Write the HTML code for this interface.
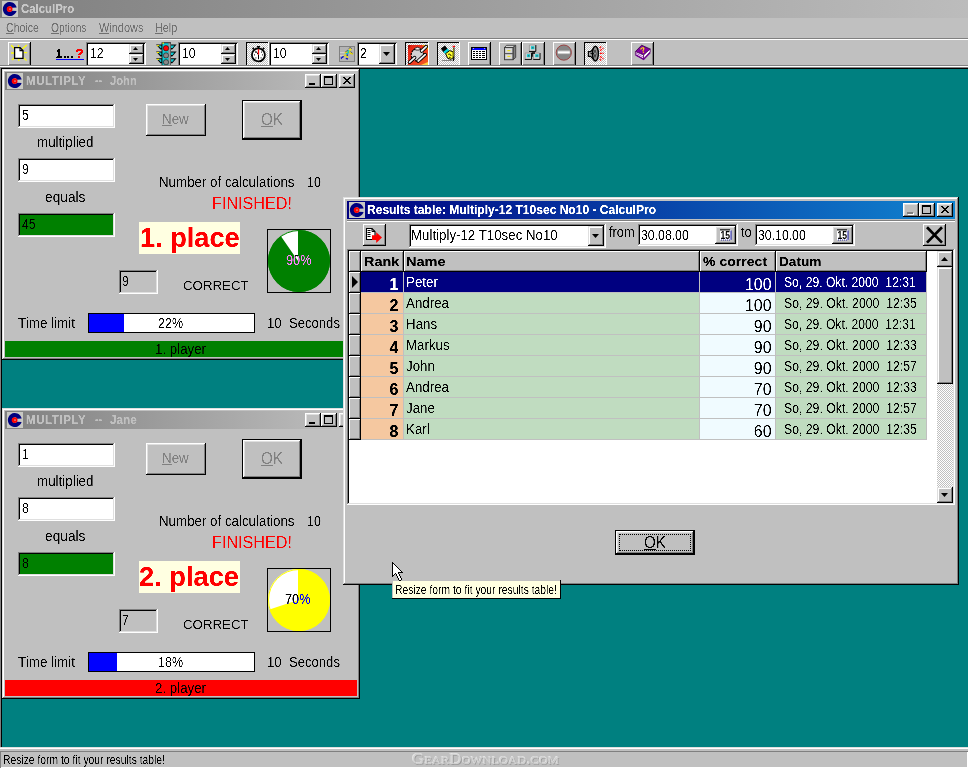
<!DOCTYPE html>
<html lang="en"><head><meta charset="utf-8"><title>CalculPro</title>
<style>
html,body{margin:0;padding:0;}
body{width:968px;height:768px;overflow:hidden;background:#008080;position:relative;font-family:"Liberation Sans",sans-serif;}
div,span,svg{position:absolute;box-sizing:border-box;}
.t{white-space:nowrap;transform-origin:0 50%;display:block;filter:url(#cr);}
u{text-decoration:underline;text-underline-offset:1px;}
.face{background:#c0c0c0;}
.raised{background:#c0c0c0;box-shadow:inset -1px -1px 0 #000,inset 1px 1px 0 #fff,inset -2px -2px 0 #808080,inset 2px 2px 0 #dfdfdf;}
.raised1{background:#c0c0c0;box-shadow:inset -1px -1px 0 #000,inset 1px 1px 0 #fff,inset -2px -2px 0 #808080;}
.tb{background:#c0c0c0;box-shadow:inset -1px 0 0 #000,inset 1px 1px 0 #fff,inset -2px -1px 0 #808080;}
.tbd{box-shadow:inset -1px 0 0 #fff,inset 1px 1px 0 #000;}
.sunken{box-shadow:inset -1px -1px 0 #fff,inset 1px 1px 0 #808080,inset -2px -2px 0 #dfdfdf,inset 2px 2px 0 #000;}
.frame{background:#c0c0c0;box-shadow:inset -1px -1px 0 #000,inset 1px 1px 0 #dfdfdf,inset -2px -2px 0 #808080,inset 2px 2px 0 #fff;}
.down{box-shadow:inset -1px -1px 0 #fff,inset 1px 1px 0 #000,inset 2px 2px 0 #808080;}
.dither{background-color:#c0c0c0;background-image:conic-gradient(#fff 25%,#c0c0c0 0 50%,#fff 0 75%,#c0c0c0 0);background-size:2px 2px;}
.capI{background:linear-gradient(90deg,#808080,#c0c0c0);}
.capA{background:linear-gradient(90deg,#000080,#1084d0);}
.cb{background:#c0c0c0;box-shadow:inset -1px -1px 0 #000,inset 1px 1px 0 #fff,inset -2px -2px 0 #808080,inset 2px 2px 0 #dfdfdf;}
</style></head>
<body>
<svg width="0" height="0" style="left:0;top:0"><defs><filter id="cr" x="0" y="0" width="100%" height="100%"><feComponentTransfer><feFuncA type="linear" slope="3" intercept="-1.05"/></feComponentTransfer></filter><filter id="cb" x="0" y="0" width="100%" height="100%"><feComponentTransfer><feFuncA type="linear" slope="2" intercept="-0.35"/></feComponentTransfer></filter><filter id="ch" x="0" y="0" width="100%" height="100%"><feComponentTransfer><feFuncA type="discrete" tableValues="0 1 1 1"/></feComponentTransfer></filter></defs></svg>
<div class="" style="left:0px;top:0px;width:968px;height:18px;background:linear-gradient(90deg,#808080,#bcbcbc);"></div>
<svg width="16" height="16" viewBox="0 0 16 16" style="left:2px;top:1px"><rect width="16" height="16" fill="#c8c8c4"/><path d="M14.66 6.5 A7 7 0 1 0 14.6 9.9 L9.85 9.7 A2.6 2.6 0 1 1 10 6.7 Z" fill="#000080"/><circle cx="7.6" cy="8.1" r="2.9" fill="#ff0000"/><circle cx="8" cy="8.1" r="0.9" fill="#d09090"/></svg>
<span class="t " style="left:21.00px;top:0px;font-size:12.5px;line-height:19px;color:#c8c8c8;font-weight:bold;filter:url(#cb);transform:scaleX(0.9129);">CalculPro</span>
<div class="face" style="left:0px;top:18px;width:968px;height:20px;"></div>
<span class="t " style="left:6.30px;top:18px;font-size:13px;line-height:20px;color:#707070;transform:scaleX(0.8149);"><u>C</u>hoice</span>
<span class="t " style="left:51.30px;top:18px;font-size:13px;line-height:20px;color:#707070;transform:scaleX(0.7925);"><u>O</u>ptions</span>
<span class="t " style="left:99.00px;top:18px;font-size:13px;line-height:20px;color:#707070;transform:scaleX(0.8421);"><u>W</u>indows</span>
<span class="t " style="left:155.30px;top:18px;font-size:13px;line-height:20px;color:#707070;transform:scaleX(0.8306);"><u>H</u>elp</span>
<div class="" style="left:0px;top:38px;width:968px;height:1px;background:#808080"></div>
<div class="" style="left:0px;top:39px;width:968px;height:1px;background:#fff"></div>
<div class="face" style="left:0px;top:40px;width:968px;height:25px;"></div>
<div class="" style="left:0px;top:65px;width:968px;height:1px;background:#808080"></div>
<div class="" style="left:0px;top:66px;width:968px;height:1px;background:#fff"></div>
<div class="tb" style="left:8px;top:42px;width:23px;height:23px;"><svg width="23" height="23" viewBox="0 0 23 23" style="left:0px;top:0px"><g stroke="#ffff00" stroke-width="1.3"><path d="M3.2 3.2l3 3M18.8 3l-4.6 4M3 11h3.4M15.8 10.6h3.4M4 18l2.6-2.6M18.5 18.6l-3-3M10.8 19v-2.5M10.5 3v2.5"/></g><path d="M6.6 5.6h5.4l3 3v7.8h-8.4z" fill="#fff" stroke="#000" stroke-width="1.3"/><path d="M12 5.6v3h3" fill="none" stroke="#000" stroke-width="1.1"/></svg></div>
<span class="t " style="left:56.30px;top:45px;font-size:12.5px;line-height:19px;color:#000;font-weight:bold;filter:url(#ch);letter-spacing:0.6px;transform:scaleX(0.9173);">1...</span>
<span class="t " style="left:75.40px;top:44px;font-size:13px;line-height:20px;color:#ff0000;font-weight:bold;filter:url(#ch);transform:scaleX(1.0829);">?</span>
<div class="" style="left:56px;top:59px;width:28px;height:1px;background:#0000ff;"></div>
<div class="" style="left:86px;top:42px;width:60px;height:23px;background:#fff;box-shadow:inset 1px 1px 0 #808080,inset -1px 0 0 #fff,inset 2px 2px 0 #000,inset -2px -1px 0 #dfdfdf;"></div><div class="frame" style="left:129px;top:44px;width:15px;height:10px;"></div><div class="frame" style="left:129px;top:54px;width:15px;height:10px;"></div><svg width="15" height="10" viewBox="0 0 15 10" style="left:129px;top:44px"><path d="M4 6h5l-2.5-3z" fill="#000"/></svg><svg width="15" height="10" viewBox="0 0 15 10" style="left:129px;top:54px"><path d="M4 4h5l-2.5 3z" fill="#000"/></svg><span class="t " style="left:89.50px;top:43px;font-size:14px;line-height:21px;color:#000;transform:scaleX(0.8700);">12</span>
<div class="" style="left:156px;top:42px;width:21px;height:23px;"><svg width="21" height="23" viewBox="0 0 21 23" style="left:0px;top:0px"><path d="M0 2.6h6v5h-1.6z" fill="#000"/><path d="M2.4 3.6h3.2v2.6h-1z" fill="#10c8d0"/><rect x="0.8" y="3.1" width="2.4" height="1.1" fill="#ffee00"/><path d="M20.6 2.6h-6.6v5h2.2z" fill="#000"/><path d="M18.4 3.6h-3.4v2.4h1.6z" fill="#10c8d0"/><path d="M0 9.5h6v5h-1.6z" fill="#000"/><path d="M2.4 10.5h3.2v2.6h-1z" fill="#10c8d0"/><rect x="0.8" y="10.0" width="2.4" height="1.1" fill="#ffee00"/><path d="M20.6 9.5h-6.6v5h2.2z" fill="#000"/><path d="M18.4 10.5h-3.4v2.4h1.6z" fill="#10c8d0"/><path d="M0 16.3h6v5h-1.6z" fill="#000"/><path d="M2.4 17.3h3.2v2.6h-1z" fill="#10c8d0"/><rect x="0.8" y="16.8" width="2.4" height="1.1" fill="#ffee00"/><path d="M20.6 16.3h-6.6v5h2.2z" fill="#000"/><path d="M18.4 17.3h-3.4v2.4h1.6z" fill="#10c8d0"/><rect x="5.6" y="0.4" width="9.4" height="22.6" fill="#000"/><rect x="6.4" y="1.2" width="6.4" height="21.8" fill="#10c8d0"/><rect x="12.4" y="1.2" width="2.2" height="21.8" fill="#a0a0a0"/><rect x="6.4" y="0.6" width="1.6" height="1.2" fill="#ffee00"/><circle cx="10" cy="6.2" r="2.7" fill="#ff0000" stroke="#000" stroke-width="0.5"/><circle cx="10" cy="13.4" r="2.6" fill="#888" stroke="#000" stroke-width="0.5"/><circle cx="10" cy="20.2" r="2.6" fill="#888" stroke="#000" stroke-width="0.5"/></svg></div>
<div class="" style="left:178px;top:42px;width:60px;height:23px;background:#fff;box-shadow:inset 1px 1px 0 #808080,inset -1px 0 0 #fff,inset 2px 2px 0 #000,inset -2px -1px 0 #dfdfdf;"></div><div class="frame" style="left:221px;top:44px;width:15px;height:10px;"></div><div class="frame" style="left:221px;top:54px;width:15px;height:10px;"></div><svg width="15" height="10" viewBox="0 0 15 10" style="left:221px;top:44px"><path d="M4 6h5l-2.5-3z" fill="#000"/></svg><svg width="15" height="10" viewBox="0 0 15 10" style="left:221px;top:54px"><path d="M4 4h5l-2.5 3z" fill="#000"/></svg><span class="t " style="left:181.50px;top:43px;font-size:14px;line-height:21px;color:#000;transform:scaleX(0.8700);">10</span>
<div class="dither tbd" style="left:246px;top:42px;width:23px;height:23px;"><svg width="23" height="23" viewBox="0 0 23 23" style="left:0px;top:0px"><circle cx="12.4" cy="12.9" r="6.5" fill="#fff" stroke="#000" stroke-width="1.8"/><path d="M11 4.6h3M12.5 4.6v2M7 6.3l1.6 1.6M17.8 6.3l-1.6 1.6M6.4 7l1.4-1.4M18.4 7l-1.4-1.4" stroke="#000" stroke-width="1.3" fill="none"/><path d="M12.5 12.8v4.4M12.3 12.6l-2.4-3.4" stroke="#000" stroke-width="1" fill="none"/><path d="M12.5 7.2v5.4" stroke="#ff0000" stroke-width="1.3"/><g fill="#000"><rect x="8" y="12.4" width="1" height="1"/><rect x="16" y="12.4" width="1" height="1"/><rect x="9" y="9.6" width="1" height="1"/><rect x="15" y="9.6" width="1" height="1"/><rect x="9.4" y="15.4" width="1" height="1"/><rect x="14.6" y="15.4" width="1" height="1"/></g></svg></div>
<div class="" style="left:269px;top:42px;width:60px;height:23px;background:#fff;box-shadow:inset 1px 1px 0 #808080,inset -1px 0 0 #fff,inset 2px 2px 0 #000,inset -2px -1px 0 #dfdfdf;"></div><div class="frame" style="left:312px;top:44px;width:15px;height:10px;"></div><div class="frame" style="left:312px;top:54px;width:15px;height:10px;"></div><svg width="15" height="10" viewBox="0 0 15 10" style="left:312px;top:44px"><path d="M4 6h5l-2.5-3z" fill="#000"/></svg><svg width="15" height="10" viewBox="0 0 15 10" style="left:312px;top:54px"><path d="M4 4h5l-2.5 3z" fill="#000"/></svg><span class="t " style="left:272.50px;top:43px;font-size:14px;line-height:21px;color:#000;transform:scaleX(0.8700);">10</span>
<div class="" style="left:339px;top:46px;width:16px;height:16px;"><svg width="16" height="16" viewBox="0 0 16 16" style="left:0px;top:0px"><rect width="16" height="16" fill="#b4b4b4"/><path d="M1 6.5h5M1 9.5h4M1 12.5h3" stroke="#d0d0d0" stroke-width="1"/><rect x="0.5" y="0.5" width="15" height="15" fill="none" stroke="#808080"/><path d="M9.6 2.6l1.6-1 1.6 1M6 6.4l3-2.4M11.6 5.4l2.4 2.6" stroke="#303030" stroke-width="0.7" fill="none"/><path d="M10.4 4.6l-3 3.6" stroke="#10c0c8" stroke-width="2.4" fill="none"/><circle cx="11.2" cy="3.6" r="1.2" fill="#ffe800"/><path d="M10 5.4l2 2.2 2 0.2M8.6 6l-3 1" stroke="#e8d800" stroke-width="1.3" fill="none"/><path d="M7.2 8.6l-2.4 1.6M7.6 9l1 3.2" stroke="#e8d800" stroke-width="1.4" fill="none"/><path d="M4.6 10.2l-2.8 2.4" stroke="#1818c0" stroke-width="1.5" fill="none"/><path d="M6.8 12.4l2.2 0.6" stroke="#1818c0" stroke-width="1.5" fill="none"/><path d="M7.6 8.8l1.4 0.6" stroke="#1818c0" stroke-width="1.4" fill="none"/></svg></div>
<div class="" style="left:357px;top:42px;width:40px;height:23px;background:#fff;box-shadow:inset 1px 1px 0 #808080,inset -1px 0 0 #fff,inset 2px 2px 0 #000,inset -2px -1px 0 #dfdfdf;"></div>
<div class="frame" style="left:379px;top:44px;width:16px;height:20px;"></div>
<svg width="16" height="20" viewBox="0 0 16 20" style="left:379px;top:44px"><path d="M4 8h7l-3.5 4z" fill="#000"/></svg>
<span class="t " style="left:359.70px;top:43px;font-size:14px;line-height:21px;color:#000;transform:scaleX(0.8700);">2</span>
<div class="dither tbd" style="left:405px;top:42px;width:24px;height:23px;"><svg width="24" height="23" viewBox="0 0 24 23" style="left:0px;top:0px"><defs><linearGradient id="pg" x1="0" y1="0" x2="1" y2="1"><stop offset="0" stop-color="#e02010"/><stop offset="0.55" stop-color="#f03820"/><stop offset="1" stop-color="#f06020"/></linearGradient></defs><rect x="3" y="3" width="20" height="20" fill="url(#pg)"/><path d="M17 3h6v5z" fill="#ffb000"/><path d="M3 3h3l-3 5z" fill="#b01008"/><path d="M16 23h7v-3z" fill="#ffd040"/><path d="M8.2 8.2a6 6.5 45 0 1 8.6 0.3a6 6.5 45 0 1 0.2 8.7a6 6.5 45 0 1-8.8 0.2a6 6.5 45 0 1 0-9.2z" fill="#d4d4d4" stroke="#000" stroke-width="1.1" stroke-dasharray="2 1"/><path d="M9.5 6.5q3-2.5 6 0l-1 1.5h-4z" fill="#fff" stroke="#000" stroke-width="0.8"/><g stroke="#000" stroke-width="3.6" stroke-linecap="round" fill="none"><path d="M4.6 20.2l5-4.6M16.6 9l4.6-4.4M13.2 19l7-6.4"/></g><g stroke="#f4f4f4" stroke-width="1.8" stroke-linecap="round" fill="none"><path d="M4.6 20.2l5-4.6M16.6 9l4.6-4.4M13.2 19l7-6.4"/></g></svg></div>
<div class="dither tbd" style="left:437px;top:42px;width:23px;height:23px;"><svg width="23" height="23" viewBox="0 0 23 23" style="left:0px;top:0px"><path d="M3.8 6.6l4.2-3.2 2.8 3.8-4.2 3.2z" fill="#000"/><path d="M6.4 9.8l4.3-3.2 1.7 2.3-4.3 3.2z" fill="#00d8e0"/><path d="M8.6 11.6l4-3 3.6 1.2v6l-2.4 1.6-3.2-1.2z" fill="#ffff30" stroke="#000" stroke-width="1"/><path d="M11.2 12.4a1.8 1.8 0 0 1 2.8 1.6M12 15l1.8 1" stroke="#000" stroke-width="0.9" fill="none"/><path d="M16.8 5.6v11.4l-0.6 2" stroke="#000" stroke-width="1.3" fill="none"/><path d="M16.3 6.5v8" stroke="#e0e000" stroke-width="0.7" fill="none"/><rect x="15.6" y="3.8" width="2.4" height="1.4" fill="#ff0000"/><path d="M5.2 18.5h10" stroke="#808080" stroke-width="1"/></svg></div>
<div class="tb" style="left:468px;top:42px;width:23px;height:23px;"><svg shape-rendering="crispEdges" width="23" height="23" viewBox="0 0 23 23" style="left:0px;top:0px"><rect x="3.5" y="5.5" width="15" height="12" fill="#fff" stroke="#000"/><rect x="4" y="6" width="14" height="2" fill="#0000ff"/><rect x="4.6" y="6.2" width="1.6" height="0.8" fill="#c0c0a0"/><rect x="15.6" y="6.2" width="1.6" height="0.8" fill="#c0c0a0"/><g fill="#000"><rect x="5" y="9" width="2" height="1"/><rect x="8" y="9" width="2" height="1"/><rect x="11" y="9" width="2" height="1"/><rect x="14" y="9" width="3" height="1"/><rect x="5" y="11" width="2" height="1"/><rect x="8" y="11" width="2" height="1"/><rect x="11" y="11" width="2" height="1"/><rect x="14" y="11" width="3" height="1"/><rect x="5" y="13" width="2" height="1"/><rect x="8" y="13" width="2" height="1"/><rect x="11" y="13" width="2" height="1"/><rect x="14" y="13" width="3" height="1"/><rect x="5" y="15" width="2" height="1"/><rect x="8" y="15" width="2" height="1"/><rect x="11" y="15" width="2" height="1"/><rect x="14" y="15" width="3" height="1"/></g></svg></div>
<div class="tb" style="left:499px;top:42px;width:23px;height:23px;"><svg width="23" height="23" viewBox="0 0 23 23" style="left:0px;top:0px"><path d="M5.5 5.5l2-2.2h9.2l-2.7 2.2z" fill="#d8d8d8" stroke="#404040" stroke-width="0.9"/><path d="M14 5.5l2.7-2.2v12.2l-2.7 2.2z" fill="#808080" stroke="#404040" stroke-width="0.9"/><rect x="5.5" y="5.5" width="8.5" height="12.2" fill="#c4c4c4" stroke="#404040" stroke-width="1"/><rect x="6.8" y="6.8" width="6" height="3.8" fill="#dcdcdc"/><rect x="6.8" y="12.6" width="6" height="3.8" fill="#dcdcdc"/><path d="M5.5 11.6h8.5" stroke="#505050" stroke-width="1"/><rect x="8.4" y="8" width="3" height="1.2" fill="#e8e020"/><rect x="8.4" y="13.8" width="3" height="1.2" fill="#e8e020"/></svg></div>
<div class="tb" style="left:522px;top:42px;width:23px;height:23px;"><svg width="23" height="23" viewBox="0 0 23 23" style="left:0px;top:0px"><rect x="7.4" y="3" width="6.4" height="6" fill="#d8d8d8"/><path d="M13.8 3v6.4h-6.8" stroke="#000" stroke-width="1" fill="none"/><path d="M7.4 9v-6h6" stroke="#909090" stroke-width="0.8" fill="none"/><rect x="9.0" y="4.2" width="3.4" height="3" fill="#10c8d0"/><rect x="10.2" y="5.2" width="1.2" height="1.2" fill="#505050"/><rect x="3.2" y="11" width="6.4" height="6" fill="#d8d8d8"/><path d="M9.600000000000001 11v6.4h-6.8" stroke="#000" stroke-width="1" fill="none"/><path d="M3.2 17v-6h6" stroke="#909090" stroke-width="0.8" fill="none"/><rect x="4.800000000000001" y="12.2" width="3.4" height="3" fill="#10c8d0"/><rect x="6.0" y="13.2" width="1.2" height="1.2" fill="#505050"/><rect x="11.6" y="11" width="6.4" height="6" fill="#d8d8d8"/><path d="M18.0 11v6.4h-6.8" stroke="#000" stroke-width="1" fill="none"/><path d="M11.6 17v-6h6" stroke="#909090" stroke-width="0.8" fill="none"/><rect x="13.2" y="12.2" width="3.4" height="3" fill="#10c8d0"/><rect x="14.399999999999999" y="13.2" width="1.2" height="1.2" fill="#505050"/><path d="M9.6 10.2h3.4v1.6h-2.2v3h-1.2z" fill="#000"/></svg></div>
<div class="tb" style="left:553px;top:42px;width:23px;height:23px;"><svg width="23" height="23" viewBox="0 0 23 23" style="left:0px;top:0px"><defs><linearGradient id="sg" x1="0" y1="0" x2="0" y2="1"><stop offset="0" stop-color="#888"/><stop offset="0.45" stop-color="#fff"/><stop offset="0.6" stop-color="#fff"/><stop offset="1" stop-color="#999"/></linearGradient></defs><circle cx="10.8" cy="10.6" r="7.6" fill="#868686" stroke="#983838" stroke-width="0.9"/><rect x="4.8" y="8" width="12" height="4.4" fill="url(#sg)"/></svg></div>
<div class="dither tbd" style="left:584px;top:42px;width:23px;height:23px;"><svg width="23" height="23" viewBox="0 0 23 23" style="left:0px;top:0px"><path d="M4.4 9.6h2.2l3.4-3.6v12l-3.4-3.6h-2.2z" fill="#b0b0b0" stroke="#000" stroke-width="1.2"/><ellipse cx="11.4" cy="11.6" rx="3" ry="7.4" fill="#909090" stroke="#000" stroke-width="1.4"/><path d="M11 8v7.4M6.4 11.6h4" stroke="#000" stroke-width="0.9"/><ellipse cx="11" cy="11.6" rx="1" ry="2" fill="#d0d0d0" stroke="#000" stroke-width="0.6"/><g stroke="#ff1010" stroke-width="1.2" stroke-dasharray="2.4 0.8"><path d="M16 11.4h4M16 8.8l3.4-2.8M16 14.2l3.4 2.8M15.6 6.2l1.8-2.2M15.6 16.8l1.8 2.2"/></g></svg></div>
<div class="tb" style="left:631px;top:42px;width:23px;height:23px;"><svg width="23" height="23" viewBox="0 0 23 23" style="left:0px;top:0px"><path d="M4.4 9.6l6.2-6.4 8.6 3.8-6.6 6z" fill="#8000a0" stroke="#300040" stroke-width="0.8"/><path d="M4.4 9.6v3.2l8.2 4.4v-4.2z" fill="#fff" stroke="#500060" stroke-width="0.8"/><path d="M12.6 13l6.6-6v3l-6.6 7.2z" fill="#fff" stroke="#500060" stroke-width="0.8"/><path d="M4.6 12.8l8 4.6 6.6-7" stroke="#700090" stroke-width="1.5" fill="none"/><path d="M5 11.2l7.6 4" stroke="#9020b0" stroke-width="0.7" fill="none"/><text x="12.2" y="10.8" font-family="Liberation Sans,sans-serif" font-weight="bold" font-size="8" fill="#ffee00" text-anchor="middle" transform="rotate(-20 12 9)">?</text></svg></div>
<div class="" style="left:0px;top:67px;width:968px;height:1px;background:#808080"></div>
<div class="" style="left:0px;top:67px;width:1px;height:680px;background:#808080"></div>
<div class="" style="left:1px;top:68px;width:967px;height:1px;background:#000"></div>
<div class="" style="left:1px;top:68px;width:1px;height:679px;background:#000"></div>
<div class="" style="left:0px;top:747px;width:968px;height:1px;background:#dfdfdf"></div>
<div class="" style="left:0px;top:748px;width:968px;height:1px;background:#fff"></div>
<div class="face" style="left:0px;top:749px;width:968px;height:19px;"></div>
<div class="" style="left:0px;top:751px;width:968px;height:17px;box-shadow:inset 1px 1px 0 #808080,inset -1px -1px 0 #fff;"></div>
<span class="t " style="left:2.80px;top:751px;font-size:12.5px;line-height:19px;color:#000;transform:scaleX(0.8268);">Resize form to fit your results table!</span>
<span class="t" style="left:411.6px;top:751px;font-family:'Liberation Serif',serif;font-variant:small-caps;font-size:15px;line-height:normal;color:#d4d4d4;text-shadow:0.7px 0.7px 0 #9a9a9a,-0.6px -0.6px 0 #e4e4e4;transform:scaleX(1.138);filter:none;">GearDownload.com</span>
<div class="frame" style="left:2px;top:69px;width:358px;height:291px;"></div><div class="capI" style="left:5px;top:72px;width:352px;height:18px;"></div><svg width="16" height="16" viewBox="0 0 16 16" style="left:7px;top:73px"><rect width="16" height="16" fill="#c8c8c4"/><path d="M14.66 6.5 A7 7 0 1 0 14.6 9.9 L9.85 9.7 A2.6 2.6 0 1 1 10 6.7 Z" fill="#000080"/><circle cx="7.6" cy="8.1" r="2.9" fill="#ff0000"/><circle cx="8" cy="8.1" r="0.9" fill="#d09090"/></svg><span class="t " style="left:26.00px;top:72px;font-size:12px;line-height:18px;color:#c0c0c0;font-weight:bold;filter:url(#cb);letter-spacing:0.6px;transform:scaleX(0.9578);">MULTIPLY</span> <span class="t " style="left:94.60px;top:72px;font-size:12px;line-height:18px;color:#c0c0c0;font-weight:bold;filter:url(#cb);transform:scaleX(0.9015);">--</span> <span class="t " style="left:110.00px;top:72px;font-size:12px;line-height:18px;color:#c0c0c0;font-weight:bold;filter:url(#cb);transform:scaleX(0.9342);">John</span><div class="cb" style="left:305px;top:74px;width:16px;height:14px"><svg width="16" height="14" viewBox="0 0 16 14" style="left:0;top:0"><rect x="4" y="9" width="6" height="2" fill="#000"/></svg></div><div class="cb" style="left:321px;top:74px;width:16px;height:14px"><svg width="16" height="14" viewBox="0 0 16 14" style="left:0;top:0"><path d="M3 2h9v9h-9z M4 4v6h7v-6z" fill="#000" fill-rule="evenodd"/></svg></div><div class="cb" style="left:339px;top:74px;width:16px;height:14px"><svg width="16" height="14" viewBox="0 0 16 14" style="left:0;top:0"><g fill="#000" shape-rendering="crispEdges"><rect x="4" y="3" width="2" height="1"/><rect x="10" y="3" width="2" height="1"/><rect x="5" y="4" width="2" height="1"/><rect x="9" y="4" width="2" height="1"/><rect x="6" y="5" width="4" height="1"/><rect x="7" y="6" width="2" height="1"/><rect x="6" y="7" width="4" height="1"/><rect x="5" y="8" width="2" height="1"/><rect x="9" y="8" width="2" height="1"/><rect x="4" y="9" width="2" height="1"/><rect x="10" y="9" width="2" height="1"/></g></svg></div><div class="sunken" style="left:18px;top:104px;width:97px;height:24px;background:#fff"></div><span class="t " style="left:21.50px;top:105px;font-size:14px;line-height:21px;color:#000;transform:scaleX(0.8700);">5</span><span class="t " style="left:37.00px;top:132px;font-size:14px;line-height:21px;color:#000;transform:scaleX(0.9552);">multiplied</span><div class="sunken" style="left:18px;top:158px;width:97px;height:24px;background:#fff"></div><span class="t " style="left:21.50px;top:159px;font-size:14px;line-height:21px;color:#000;transform:scaleX(0.8700);">9</span><span class="t " style="left:45.20px;top:187px;font-size:14px;line-height:21px;color:#000;transform:scaleX(0.9796);">equals</span><div class="sunken" style="left:18px;top:213px;width:97px;height:24px;background:#008000"></div><span class="t " style="left:21.50px;top:214px;font-size:14px;line-height:21px;color:#000;transform:scaleX(0.8700);">45</span><div class="raised" style="left:146px;top:104px;width:60px;height:32px;"></div><span class="t " style="left:161.80px;top:109px;font-size:14px;line-height:21px;color:#808080;transform:scaleX(0.9545);"><u>N</u>ew</span><div class="" style="left:242px;top:100px;width:60px;height:40px;background:#000"></div><div class="raised" style="left:243px;top:101px;width:58px;height:38px;"></div><span class="t " style="left:260.80px;top:108px;font-size:16px;line-height:24px;color:#808080;transform:scaleX(0.9512);"><u>O</u>K</span><span class="t " style="left:159.30px;top:172px;font-size:14px;line-height:21px;color:#000;transform:scaleX(0.9517);">Number of calculations</span><span class="t " style="left:306.80px;top:172px;font-size:14px;line-height:21px;color:#000;transform:scaleX(0.8877);">10</span><span class="t " style="left:212.30px;top:192px;font-size:16px;line-height:24px;color:#ff0000;transform:scaleX(1.0110);">FINISHED!</span><div class="" style="left:139px;top:222px;width:101px;height:32px;background:#ffffe1"></div><span class="t " style="left:139.80px;top:217px;font-size:28px;line-height:42px;color:#ff0000;font-weight:bold;filter:url(#cb);transform:scaleX(0.9692);">1. place</span><div class="sunken" style="left:119px;top:270px;width:39px;height:24px;background:#c0c0c0"></div><span class="t " style="left:122.00px;top:271px;font-size:14px;line-height:21px;color:#000;transform:scaleX(0.8700);">9</span><span class="t " style="left:183.30px;top:276px;font-size:13.5px;line-height:20px;color:#000;transform:scaleX(0.9842);">CORRECT</span><div class="" style="left:267px;top:229px;width:64px;height:64px;background:#c0c0c0;border:1px solid #000;"></div><svg width="64" height="64" viewBox="0 0 64 64" style="left:267px;top:229px"><ellipse cx="32" cy="32" rx="31" ry="31" fill="#008000"/><path d="M31 32 L31 1 L32 1 A31 31 0 0 0 13.78 6.92 Z" fill="#fff"/><ellipse cx="32" cy="32" rx="30.5" ry="30.5" fill="none" stroke="#008000" stroke-width="1"/></svg><span class="t " style="left:285.60px;top:250px;font-size:14px;line-height:21px;color:#fff;transform:scaleX(0.9139);mix-blend-mode:difference;">90%</span><span class="t " style="left:18.30px;top:313px;font-size:14px;line-height:21px;color:#000;transform:scaleX(0.9601);">Time limit</span><div class="" style="left:88px;top:313px;width:167px;height:20px;background:#fff;border:1px solid #000"></div><div class="" style="left:89px;top:314px;width:35px;height:18px;background:#0000ff"></div><span class="t " style="left:158.00px;top:313px;font-size:14px;line-height:21px;color:#000;transform:scaleX(0.8925);">22%</span><span class="t " style="left:267.30px;top:313px;font-size:14px;line-height:21px;color:#000;transform:scaleX(0.9377);">10 &nbsp;Seconds</span><div class="" style="left:5px;top:341px;width:352px;height:16px;background:#008000"></div><span class="t " style="left:155.20px;top:339px;font-size:14px;line-height:21px;color:#000;transform:scaleX(0.9498);">1. player</span>
<div class="frame" style="left:2px;top:408px;width:358px;height:291px;"></div><div class="capI" style="left:5px;top:411px;width:352px;height:18px;"></div><svg width="16" height="16" viewBox="0 0 16 16" style="left:7px;top:412px"><rect width="16" height="16" fill="#c8c8c4"/><path d="M14.66 6.5 A7 7 0 1 0 14.6 9.9 L9.85 9.7 A2.6 2.6 0 1 1 10 6.7 Z" fill="#000080"/><circle cx="7.6" cy="8.1" r="2.9" fill="#ff0000"/><circle cx="8" cy="8.1" r="0.9" fill="#d09090"/></svg><span class="t " style="left:26.00px;top:411px;font-size:12px;line-height:18px;color:#c0c0c0;font-weight:bold;filter:url(#cb);letter-spacing:0.6px;transform:scaleX(0.9578);">MULTIPLY</span> <span class="t " style="left:94.60px;top:411px;font-size:12px;line-height:18px;color:#c0c0c0;font-weight:bold;filter:url(#cb);transform:scaleX(0.9015);">--</span> <span class="t " style="left:110.00px;top:411px;font-size:12px;line-height:18px;color:#c0c0c0;font-weight:bold;filter:url(#cb);transform:scaleX(0.9793);">Jane</span><div class="cb" style="left:305px;top:413px;width:16px;height:14px"><svg width="16" height="14" viewBox="0 0 16 14" style="left:0;top:0"><rect x="4" y="9" width="6" height="2" fill="#000"/></svg></div><div class="cb" style="left:321px;top:413px;width:16px;height:14px"><svg width="16" height="14" viewBox="0 0 16 14" style="left:0;top:0"><path d="M3 2h9v9h-9z M4 4v6h7v-6z" fill="#000" fill-rule="evenodd"/></svg></div><div class="cb" style="left:339px;top:413px;width:16px;height:14px"><svg width="16" height="14" viewBox="0 0 16 14" style="left:0;top:0"><g fill="#000" shape-rendering="crispEdges"><rect x="4" y="3" width="2" height="1"/><rect x="10" y="3" width="2" height="1"/><rect x="5" y="4" width="2" height="1"/><rect x="9" y="4" width="2" height="1"/><rect x="6" y="5" width="4" height="1"/><rect x="7" y="6" width="2" height="1"/><rect x="6" y="7" width="4" height="1"/><rect x="5" y="8" width="2" height="1"/><rect x="9" y="8" width="2" height="1"/><rect x="4" y="9" width="2" height="1"/><rect x="10" y="9" width="2" height="1"/></g></svg></div><div class="sunken" style="left:18px;top:443px;width:97px;height:24px;background:#fff"></div><span class="t " style="left:22.30px;top:444px;font-size:14px;line-height:21px;color:#000;transform:scaleX(0.8700);">1</span><span class="t " style="left:37.00px;top:471px;font-size:14px;line-height:21px;color:#000;transform:scaleX(0.9552);">multiplied</span><div class="sunken" style="left:18px;top:497px;width:97px;height:24px;background:#fff"></div><span class="t " style="left:21.50px;top:498px;font-size:14px;line-height:21px;color:#000;transform:scaleX(0.8700);">8</span><span class="t " style="left:45.20px;top:526px;font-size:14px;line-height:21px;color:#000;transform:scaleX(0.9796);">equals</span><div class="sunken" style="left:18px;top:552px;width:97px;height:24px;background:#008000"></div><span class="t " style="left:21.50px;top:553px;font-size:14px;line-height:21px;color:#000;transform:scaleX(0.8700);">8</span><div class="raised" style="left:146px;top:443px;width:60px;height:32px;"></div><span class="t " style="left:161.80px;top:448px;font-size:14px;line-height:21px;color:#808080;transform:scaleX(0.9545);"><u>N</u>ew</span><div class="" style="left:242px;top:439px;width:60px;height:40px;background:#000"></div><div class="raised" style="left:243px;top:440px;width:58px;height:38px;"></div><span class="t " style="left:260.80px;top:447px;font-size:16px;line-height:24px;color:#808080;transform:scaleX(0.9512);"><u>O</u>K</span><span class="t " style="left:159.30px;top:511px;font-size:14px;line-height:21px;color:#000;transform:scaleX(0.9517);">Number of calculations</span><span class="t " style="left:306.80px;top:511px;font-size:14px;line-height:21px;color:#000;transform:scaleX(0.8877);">10</span><span class="t " style="left:212.30px;top:531px;font-size:16px;line-height:24px;color:#ff0000;transform:scaleX(1.0110);">FINISHED!</span><div class="" style="left:139px;top:561px;width:101px;height:32px;background:#ffffe1"></div><span class="t " style="left:139.00px;top:556px;font-size:28px;line-height:42px;color:#ff0000;font-weight:bold;filter:url(#cb);transform:scaleX(0.9731);">2. place</span><div class="sunken" style="left:119px;top:609px;width:39px;height:24px;background:#c0c0c0"></div><span class="t " style="left:122.00px;top:610px;font-size:14px;line-height:21px;color:#000;transform:scaleX(0.8700);">7</span><span class="t " style="left:183.30px;top:615px;font-size:13.5px;line-height:20px;color:#000;transform:scaleX(0.9842);">CORRECT</span><div class="" style="left:267px;top:568px;width:64px;height:64px;background:#c0c0c0;border:1px solid #000;"></div><svg width="64" height="64" viewBox="0 0 64 64" style="left:267px;top:568px"><ellipse cx="32" cy="32" rx="31" ry="31" fill="#ffff00"/><path d="M31 32 L31 1 L32 1 A31 31 0 0 0 2.52 41.58 Z" fill="#fff"/><ellipse cx="32" cy="32" rx="30.5" ry="30.5" fill="none" stroke="#ffff00" stroke-width="1"/></svg><span class="t " style="left:284.80px;top:589px;font-size:14px;line-height:21px;color:#fff;transform:scaleX(0.9139);mix-blend-mode:difference;">70%</span><span class="t " style="left:18.30px;top:652px;font-size:14px;line-height:21px;color:#000;transform:scaleX(0.9601);">Time limit</span><div class="" style="left:88px;top:652px;width:167px;height:20px;background:#fff;border:1px solid #000"></div><div class="" style="left:89px;top:653px;width:28px;height:18px;background:#0000ff"></div><span class="t " style="left:158.00px;top:652px;font-size:14px;line-height:21px;color:#000;transform:scaleX(0.8925);">18%</span><span class="t " style="left:267.30px;top:652px;font-size:14px;line-height:21px;color:#000;transform:scaleX(0.9377);">10 &nbsp;Seconds</span><div class="" style="left:5px;top:680px;width:352px;height:16px;background:#ff0000"></div><span class="t " style="left:155.20px;top:678px;font-size:14px;line-height:21px;color:#000;transform:scaleX(0.9498);">2. player</span>
<div class="frame" style="left:343px;top:197px;width:616px;height:388px;"></div>
<div class="capA" style="left:347px;top:201px;width:608px;height:18px;"></div>
<svg width="16" height="16" viewBox="0 0 16 16" style="left:349px;top:202px"><rect width="16" height="16" fill="#c8c8c4"/><path d="M14.66 6.5 A7 7 0 1 0 14.6 9.9 L9.85 9.7 A2.6 2.6 0 1 1 10 6.7 Z" fill="#000080"/><circle cx="7.6" cy="8.1" r="2.9" fill="#ff0000"/><circle cx="8" cy="8.1" r="0.9" fill="#d09090"/></svg>
<span class="t " style="left:367.00px;top:201px;font-size:12.5px;line-height:19px;color:#fff;font-weight:bold;filter:url(#cb);transform:scaleX(0.9631);">Results table: Multiply-12 T10sec No10 - CalculPro</span>
<div class="cb" style="left:903px;top:203px;width:16px;height:14px"><svg width="16" height="14" viewBox="0 0 16 14" style="left:0;top:0"><rect x="5" y="10" width="6" height="2" fill="#fff"/><rect x="4" y="9" width="6" height="2" fill="#808080"/></svg></div><div class="cb" style="left:919px;top:203px;width:16px;height:14px"><svg width="16" height="14" viewBox="0 0 16 14" style="left:0;top:0"><path d="M3 2h9v9h-9z M4 4v6h7v-6z" fill="#000" fill-rule="evenodd"/></svg></div><div class="cb" style="left:937px;top:203px;width:16px;height:14px"><svg width="16" height="14" viewBox="0 0 16 14" style="left:0;top:0"><g fill="#000" shape-rendering="crispEdges"><rect x="4" y="3" width="2" height="1"/><rect x="10" y="3" width="2" height="1"/><rect x="5" y="4" width="2" height="1"/><rect x="9" y="4" width="2" height="1"/><rect x="6" y="5" width="4" height="1"/><rect x="7" y="6" width="2" height="1"/><rect x="6" y="7" width="4" height="1"/><rect x="5" y="8" width="2" height="1"/><rect x="9" y="8" width="2" height="1"/><rect x="4" y="9" width="2" height="1"/><rect x="10" y="9" width="2" height="1"/></g></svg></div>
<div class="" style="left:347px;top:220px;width:608px;height:1px;background:#808080"></div>
<div class="" style="left:347px;top:221px;width:608px;height:1px;background:#fff"></div>
<div class="raised1" style="left:363px;top:224px;width:23px;height:22px;"><svg width="23" height="22" viewBox="0 0 23 22" style="left:0px;top:0px"><path d="M3.5 4.5h5.5l3 3v8h-8.5z" fill="#fff" stroke="#000" stroke-width="1.1"/><path d="M9 4.5v3h3" fill="none" stroke="#000" stroke-width="1"/><path d="M4.5 6.5h3M4.5 8.5h3M4.5 10.5h3M4.5 12.5h3" stroke="#000" stroke-width="1"/><path d="M9 11.3h4.2v-3l5.8 5.3-5.8 5.4v-3h-4.2z" fill="#ff0000"/></svg></div>
<div class="sunken" style="left:409px;top:224px;width:197px;height:24px;background:#fff"></div>
<div class="frame" style="left:588px;top:226px;width:16px;height:20px;"></div>
<svg width="16" height="20" viewBox="0 0 16 20" style="left:588px;top:226px"><path d="M4 8h7l-3.5 4z" fill="#000"/></svg>
<span class="t " style="left:411.20px;top:225px;font-size:14px;line-height:21px;color:#000;transform:scaleX(0.9493);">Multiply-12 T10sec No10</span>
<span class="t " style="left:609.30px;top:222px;font-size:14px;line-height:21px;color:#000;transform:scaleX(0.9143);">from</span>
<div class="sunken" style="left:638px;top:224px;width:100px;height:22px;background:#fff"></div><div class="raised" style="left:715px;top:226px;width:21px;height:18px;"></div><svg width="21" height="18" viewBox="0 0 21 18" style="left:715px;top:226px"><rect x="5" y="4" width="11" height="10" fill="#fff"/><rect x="5" y="3.2" width="10" height="1.3" fill="#202020"/><path d="M16 4.5v9.4" stroke="#0000a0" stroke-width="0.9" fill="none"/><path d="M6 14h10" stroke="#0000a0" stroke-width="0.8" stroke-dasharray="1 1" fill="none"/><text x="10.3" y="13" font-family="Liberation Sans,sans-serif" font-size="10.5" font-weight="bold" text-anchor="middle" fill="#000" textLength="9.6" lengthAdjust="spacingAndGlyphs">15</text></svg><span class="t " style="left:640.80px;top:225px;font-size:14px;line-height:21px;color:#000;transform:scaleX(0.8765);">30.08.00</span>
<span class="t " style="left:741.20px;top:222px;font-size:14px;line-height:21px;color:#000;transform:scaleX(0.9229);">to</span>
<div class="sunken" style="left:755px;top:224px;width:100px;height:22px;background:#fff"></div><div class="raised" style="left:832px;top:226px;width:21px;height:18px;"></div><svg width="21" height="18" viewBox="0 0 21 18" style="left:832px;top:226px"><rect x="5" y="4" width="11" height="10" fill="#fff"/><rect x="5" y="3.2" width="10" height="1.3" fill="#202020"/><path d="M16 4.5v9.4" stroke="#0000a0" stroke-width="0.9" fill="none"/><path d="M6 14h10" stroke="#0000a0" stroke-width="0.8" stroke-dasharray="1 1" fill="none"/><text x="10.3" y="13" font-family="Liberation Sans,sans-serif" font-size="10.5" font-weight="bold" text-anchor="middle" fill="#000" textLength="9.6" lengthAdjust="spacingAndGlyphs">15</text></svg><span class="t " style="left:757.80px;top:225px;font-size:14px;line-height:21px;color:#000;transform:scaleX(0.8765);">30.10.00</span>
<div class="raised1" style="left:923px;top:224px;width:23px;height:22px;"><svg width="23" height="22" viewBox="0 0 23 22" style="left:0px;top:0px"><path d="M4 3.2l15 15.4M19 3.2l-15 15.4" stroke="#000" stroke-width="2.7" fill="none"/></svg></div>
<div class="sunken" style="left:347px;top:249px;width:608px;height:256px;background:#fff"></div>
<div class="" style="left:349px;top:251px;width:578px;height:21px;background:#000"></div>
<div class="" style="left:349px;top:251px;width:11px;height:20px;background:#c0c0c0;box-shadow:inset 1px 1px 0 #fff,inset -1px -1px 0 #808080;"></div>
<div class="" style="left:361px;top:251px;width:42px;height:20px;background:#c0c0c0;box-shadow:inset 1px 1px 0 #fff,inset -1px -1px 0 #808080;"></div>
<div class="" style="left:404px;top:251px;width:295px;height:20px;background:#c0c0c0;box-shadow:inset 1px 1px 0 #fff,inset -1px -1px 0 #808080;"></div>
<div class="" style="left:700px;top:251px;width:75px;height:20px;background:#c0c0c0;box-shadow:inset 1px 1px 0 #fff,inset -1px -1px 0 #808080;"></div>
<div class="" style="left:776px;top:251px;width:150px;height:20px;background:#c0c0c0;box-shadow:inset 1px 1px 0 #fff,inset -1px -1px 0 #808080;"></div>
<span class="t " style="left:363.60px;top:252px;font-size:13.5px;line-height:20px;color:#000;font-weight:bold;filter:url(#cb);transform:scaleX(1.0672);">Rank</span>
<span class="t " style="left:406.40px;top:252px;font-size:13.5px;line-height:20px;color:#000;font-weight:bold;filter:url(#cb);transform:scaleX(1.0761);">Name</span>
<span class="t " style="left:702.80px;top:252px;font-size:13.5px;line-height:20px;color:#000;font-weight:bold;filter:url(#cb);transform:scaleX(1.0412);">% correct</span>
<span class="t " style="left:778.50px;top:252px;font-size:13.5px;line-height:20px;color:#000;font-weight:bold;filter:url(#cb);transform:scaleX(1.0096);">Datum</span>
<div class="" style="left:349px;top:272px;width:12px;height:21px;background:#000"></div>
<div class="" style="left:349px;top:272px;width:11px;height:20px;background:#c0c0c0;box-shadow:inset 1px 1px 0 #fff,inset -1px -1px 0 #808080;"></div>
<svg width="11" height="20" viewBox="0 0 11 20" style="left:349px;top:272px"><path d="M3 4l6 6-6 6z" fill="#000"/></svg>
<div class="" style="left:361px;top:272px;width:566px;height:21px;background:#c0c0c0"></div>
<div class="" style="left:361px;top:272px;width:42px;height:20px;background:#000080"></div>
<div class="" style="left:404px;top:272px;width:295px;height:20px;background:#000080"></div>
<div class="" style="left:700px;top:272px;width:75px;height:20px;background:#000080"></div>
<div class="" style="left:776px;top:272px;width:150px;height:20px;background:#000080"></div>
<span class="t " style="left:389.42px;top:273px;font-size:16px;line-height:24px;color:#fff;font-weight:bold;filter:url(#cb);">1</span>
<span class="t " style="left:406.00px;top:272px;font-size:14px;line-height:21px;color:#fff;transform:scaleX(0.9520);">Peter</span>
<span class="t " style="left:744.88px;top:273px;font-size:16px;line-height:24px;color:#fff;">100</span>
<span class="t " style="left:784.40px;top:272px;font-size:14px;line-height:21px;color:#fff;transform:scaleX(0.8684);">So, 29. Okt. 2000 &nbsp;12:31</span>
<div class="" style="left:349px;top:293px;width:12px;height:21px;background:#000"></div>
<div class="" style="left:349px;top:293px;width:11px;height:20px;background:#c0c0c0;box-shadow:inset 1px 1px 0 #fff,inset -1px -1px 0 #808080;"></div>
<div class="" style="left:361px;top:293px;width:566px;height:21px;background:#c0c0c0"></div>
<div class="" style="left:361px;top:293px;width:42px;height:20px;background:#f5c8a0"></div>
<div class="" style="left:404px;top:293px;width:295px;height:20px;background:#c0dcc0"></div>
<div class="" style="left:700px;top:293px;width:75px;height:20px;background:#f0fbff"></div>
<div class="" style="left:776px;top:293px;width:150px;height:20px;background:#c0dcc0"></div>
<span class="t " style="left:389.42px;top:294px;font-size:16px;line-height:24px;color:#000;font-weight:bold;filter:url(#cb);">2</span>
<span class="t " style="left:406.00px;top:293px;font-size:14px;line-height:21px;color:#000;transform:scaleX(0.9520);">Andrea</span>
<span class="t " style="left:744.88px;top:294px;font-size:16px;line-height:24px;color:#000;">100</span>
<span class="t " style="left:784.40px;top:293px;font-size:14px;line-height:21px;color:#000;transform:scaleX(0.8750);">So, 29. Okt. 2000 &nbsp;12:35</span>
<div class="" style="left:349px;top:314px;width:12px;height:21px;background:#000"></div>
<div class="" style="left:349px;top:314px;width:11px;height:20px;background:#c0c0c0;box-shadow:inset 1px 1px 0 #fff,inset -1px -1px 0 #808080;"></div>
<div class="" style="left:361px;top:314px;width:566px;height:21px;background:#c0c0c0"></div>
<div class="" style="left:361px;top:314px;width:42px;height:20px;background:#f5c8a0"></div>
<div class="" style="left:404px;top:314px;width:295px;height:20px;background:#c0dcc0"></div>
<div class="" style="left:700px;top:314px;width:75px;height:20px;background:#f0fbff"></div>
<div class="" style="left:776px;top:314px;width:150px;height:20px;background:#c0dcc0"></div>
<span class="t " style="left:389.42px;top:315px;font-size:16px;line-height:24px;color:#000;font-weight:bold;filter:url(#cb);">3</span>
<span class="t " style="left:406.00px;top:314px;font-size:14px;line-height:21px;color:#000;transform:scaleX(0.9520);">Hans</span>
<span class="t " style="left:753.84px;top:315px;font-size:16px;line-height:24px;color:#000;">90</span>
<span class="t " style="left:784.40px;top:314px;font-size:14px;line-height:21px;color:#000;transform:scaleX(0.8684);">So, 29. Okt. 2000 &nbsp;12:31</span>
<div class="" style="left:349px;top:335px;width:12px;height:21px;background:#000"></div>
<div class="" style="left:349px;top:335px;width:11px;height:20px;background:#c0c0c0;box-shadow:inset 1px 1px 0 #fff,inset -1px -1px 0 #808080;"></div>
<div class="" style="left:361px;top:335px;width:566px;height:21px;background:#c0c0c0"></div>
<div class="" style="left:361px;top:335px;width:42px;height:20px;background:#f5c8a0"></div>
<div class="" style="left:404px;top:335px;width:295px;height:20px;background:#c0dcc0"></div>
<div class="" style="left:700px;top:335px;width:75px;height:20px;background:#f0fbff"></div>
<div class="" style="left:776px;top:335px;width:150px;height:20px;background:#c0dcc0"></div>
<span class="t " style="left:389.42px;top:336px;font-size:16px;line-height:24px;color:#000;font-weight:bold;filter:url(#cb);">4</span>
<span class="t " style="left:406.00px;top:335px;font-size:14px;line-height:21px;color:#000;transform:scaleX(0.9520);">Markus</span>
<span class="t " style="left:753.84px;top:336px;font-size:16px;line-height:24px;color:#000;">90</span>
<span class="t " style="left:784.40px;top:335px;font-size:14px;line-height:21px;color:#000;transform:scaleX(0.8750);">So, 29. Okt. 2000 &nbsp;12:33</span>
<div class="" style="left:349px;top:356px;width:12px;height:21px;background:#000"></div>
<div class="" style="left:349px;top:356px;width:11px;height:20px;background:#c0c0c0;box-shadow:inset 1px 1px 0 #fff,inset -1px -1px 0 #808080;"></div>
<div class="" style="left:361px;top:356px;width:566px;height:21px;background:#c0c0c0"></div>
<div class="" style="left:361px;top:356px;width:42px;height:20px;background:#f5c8a0"></div>
<div class="" style="left:404px;top:356px;width:295px;height:20px;background:#c0dcc0"></div>
<div class="" style="left:700px;top:356px;width:75px;height:20px;background:#f0fbff"></div>
<div class="" style="left:776px;top:356px;width:150px;height:20px;background:#c0dcc0"></div>
<span class="t " style="left:389.42px;top:357px;font-size:16px;line-height:24px;color:#000;font-weight:bold;filter:url(#cb);">5</span>
<span class="t " style="left:406.00px;top:356px;font-size:14px;line-height:21px;color:#000;transform:scaleX(0.9520);">John</span>
<span class="t " style="left:753.84px;top:357px;font-size:16px;line-height:24px;color:#000;">90</span>
<span class="t " style="left:784.40px;top:356px;font-size:14px;line-height:21px;color:#000;transform:scaleX(0.8750);">So, 29. Okt. 2000 &nbsp;12:57</span>
<div class="" style="left:349px;top:377px;width:12px;height:21px;background:#000"></div>
<div class="" style="left:349px;top:377px;width:11px;height:20px;background:#c0c0c0;box-shadow:inset 1px 1px 0 #fff,inset -1px -1px 0 #808080;"></div>
<div class="" style="left:361px;top:377px;width:566px;height:21px;background:#c0c0c0"></div>
<div class="" style="left:361px;top:377px;width:42px;height:20px;background:#f5c8a0"></div>
<div class="" style="left:404px;top:377px;width:295px;height:20px;background:#c0dcc0"></div>
<div class="" style="left:700px;top:377px;width:75px;height:20px;background:#f0fbff"></div>
<div class="" style="left:776px;top:377px;width:150px;height:20px;background:#c0dcc0"></div>
<span class="t " style="left:389.42px;top:378px;font-size:16px;line-height:24px;color:#000;font-weight:bold;filter:url(#cb);">6</span>
<span class="t " style="left:406.00px;top:377px;font-size:14px;line-height:21px;color:#000;transform:scaleX(0.9520);">Andrea</span>
<span class="t " style="left:753.84px;top:378px;font-size:16px;line-height:24px;color:#000;">70</span>
<span class="t " style="left:784.40px;top:377px;font-size:14px;line-height:21px;color:#000;transform:scaleX(0.8750);">So, 29. Okt. 2000 &nbsp;12:33</span>
<div class="" style="left:349px;top:398px;width:12px;height:21px;background:#000"></div>
<div class="" style="left:349px;top:398px;width:11px;height:20px;background:#c0c0c0;box-shadow:inset 1px 1px 0 #fff,inset -1px -1px 0 #808080;"></div>
<div class="" style="left:361px;top:398px;width:566px;height:21px;background:#c0c0c0"></div>
<div class="" style="left:361px;top:398px;width:42px;height:20px;background:#f5c8a0"></div>
<div class="" style="left:404px;top:398px;width:295px;height:20px;background:#c0dcc0"></div>
<div class="" style="left:700px;top:398px;width:75px;height:20px;background:#f0fbff"></div>
<div class="" style="left:776px;top:398px;width:150px;height:20px;background:#c0dcc0"></div>
<span class="t " style="left:389.42px;top:399px;font-size:16px;line-height:24px;color:#000;font-weight:bold;filter:url(#cb);">7</span>
<span class="t " style="left:406.00px;top:398px;font-size:14px;line-height:21px;color:#000;transform:scaleX(0.9520);">Jane</span>
<span class="t " style="left:753.84px;top:399px;font-size:16px;line-height:24px;color:#000;">70</span>
<span class="t " style="left:784.40px;top:398px;font-size:14px;line-height:21px;color:#000;transform:scaleX(0.8750);">So, 29. Okt. 2000 &nbsp;12:57</span>
<div class="" style="left:349px;top:419px;width:12px;height:21px;background:#000"></div>
<div class="" style="left:349px;top:419px;width:11px;height:20px;background:#c0c0c0;box-shadow:inset 1px 1px 0 #fff,inset -1px -1px 0 #808080;"></div>
<div class="" style="left:361px;top:419px;width:566px;height:21px;background:#c0c0c0"></div>
<div class="" style="left:361px;top:419px;width:42px;height:20px;background:#f5c8a0"></div>
<div class="" style="left:404px;top:419px;width:295px;height:20px;background:#c0dcc0"></div>
<div class="" style="left:700px;top:419px;width:75px;height:20px;background:#f0fbff"></div>
<div class="" style="left:776px;top:419px;width:150px;height:20px;background:#c0dcc0"></div>
<span class="t " style="left:389.42px;top:420px;font-size:16px;line-height:24px;color:#000;font-weight:bold;filter:url(#cb);">8</span>
<span class="t " style="left:406.00px;top:419px;font-size:14px;line-height:21px;color:#000;transform:scaleX(0.9520);">Karl</span>
<span class="t " style="left:753.84px;top:420px;font-size:16px;line-height:24px;color:#000;">60</span>
<span class="t " style="left:784.40px;top:419px;font-size:14px;line-height:21px;color:#000;transform:scaleX(0.8750);">So, 29. Okt. 2000 &nbsp;12:35</span>
<div class="dither" style="left:937px;top:251px;width:16px;height:252px;"></div>
<div class="frame" style="left:937px;top:251px;width:16px;height:16px;"><svg width="16" height="16" viewBox="0 0 16 16" style="left:0px;top:0px"><path d="M4 10h7l-3.5-4z" fill="#000"/></svg></div>
<div class="frame" style="left:937px;top:267px;width:16px;height:117px;"></div>
<div class="frame" style="left:937px;top:487px;width:16px;height:16px;"><svg width="16" height="16" viewBox="0 0 16 16" style="left:0px;top:0px"><path d="M4 6h7l-3.5 4z" fill="#000"/></svg></div>
<div class="" style="left:615px;top:530px;width:80px;height:25px;background:#000"></div>
<div class="raised" style="left:616px;top:531px;width:78px;height:23px;"></div>
<div class="" style="left:619px;top:534px;width:72px;height:17px;border:1px dotted #000"></div>
<span class="t " style="left:644.00px;top:531px;font-size:16px;line-height:24px;color:#000;transform:scaleX(0.9512);"><u>O</u>K</span>
<div class="" style="left:392px;top:580px;width:169px;height:19px;background:#ffffe1;box-shadow:inset -1px -1px 0 #000,inset 1px 1px 0 #c0c0c0;"></div>
<span class="t " style="left:395.40px;top:581px;font-size:12.5px;line-height:19px;color:#000;transform:scaleX(0.8268);">Resize form to fit your results table!</span>
<svg shape-rendering="crispEdges" width="11" height="19" viewBox="0 0 11 19" style="left:392px;top:562px"><rect x="0" y="0" width="1" height="1" fill="#000"/><rect x="0" y="1" width="2" height="1" fill="#000"/><rect x="0" y="2" width="1" height="1" fill="#000"/><rect x="1" y="2" width="1" height="1" fill="#fff"/><rect x="2" y="2" width="1" height="1" fill="#000"/><rect x="0" y="3" width="1" height="1" fill="#000"/><rect x="1" y="3" width="2" height="1" fill="#fff"/><rect x="3" y="3" width="1" height="1" fill="#000"/><rect x="0" y="4" width="1" height="1" fill="#000"/><rect x="1" y="4" width="3" height="1" fill="#fff"/><rect x="4" y="4" width="1" height="1" fill="#000"/><rect x="0" y="5" width="1" height="1" fill="#000"/><rect x="1" y="5" width="4" height="1" fill="#fff"/><rect x="5" y="5" width="1" height="1" fill="#000"/><rect x="0" y="6" width="1" height="1" fill="#000"/><rect x="1" y="6" width="5" height="1" fill="#fff"/><rect x="6" y="6" width="1" height="1" fill="#000"/><rect x="0" y="7" width="1" height="1" fill="#000"/><rect x="1" y="7" width="6" height="1" fill="#fff"/><rect x="7" y="7" width="1" height="1" fill="#000"/><rect x="0" y="8" width="1" height="1" fill="#000"/><rect x="1" y="8" width="7" height="1" fill="#fff"/><rect x="8" y="8" width="1" height="1" fill="#000"/><rect x="0" y="9" width="1" height="1" fill="#000"/><rect x="1" y="9" width="8" height="1" fill="#fff"/><rect x="9" y="9" width="1" height="1" fill="#000"/><rect x="0" y="10" width="1" height="1" fill="#000"/><rect x="1" y="10" width="5" height="1" fill="#fff"/><rect x="6" y="10" width="5" height="1" fill="#000"/><rect x="0" y="11" width="1" height="1" fill="#000"/><rect x="1" y="11" width="2" height="1" fill="#fff"/><rect x="3" y="11" width="1" height="1" fill="#000"/><rect x="4" y="11" width="2" height="1" fill="#fff"/><rect x="6" y="11" width="1" height="1" fill="#000"/><rect x="0" y="12" width="1" height="1" fill="#000"/><rect x="1" y="12" width="1" height="1" fill="#fff"/><rect x="2" y="12" width="1" height="1" fill="#000"/><rect x="4" y="12" width="1" height="1" fill="#000"/><rect x="5" y="12" width="2" height="1" fill="#fff"/><rect x="7" y="12" width="1" height="1" fill="#000"/><rect x="0" y="13" width="2" height="1" fill="#000"/><rect x="4" y="13" width="1" height="1" fill="#000"/><rect x="5" y="13" width="2" height="1" fill="#fff"/><rect x="7" y="13" width="1" height="1" fill="#000"/><rect x="0" y="14" width="1" height="1" fill="#000"/><rect x="5" y="14" width="1" height="1" fill="#000"/><rect x="6" y="14" width="2" height="1" fill="#fff"/><rect x="8" y="14" width="1" height="1" fill="#000"/><rect x="5" y="15" width="1" height="1" fill="#000"/><rect x="6" y="15" width="2" height="1" fill="#fff"/><rect x="8" y="15" width="1" height="1" fill="#000"/><rect x="6" y="16" width="1" height="1" fill="#000"/><rect x="7" y="16" width="2" height="1" fill="#fff"/><rect x="9" y="16" width="1" height="1" fill="#000"/><rect x="6" y="17" width="1" height="1" fill="#000"/><rect x="7" y="17" width="2" height="1" fill="#fff"/><rect x="9" y="17" width="1" height="1" fill="#000"/><rect x="7" y="18" width="2" height="1" fill="#000"/></svg>
</body></html>
